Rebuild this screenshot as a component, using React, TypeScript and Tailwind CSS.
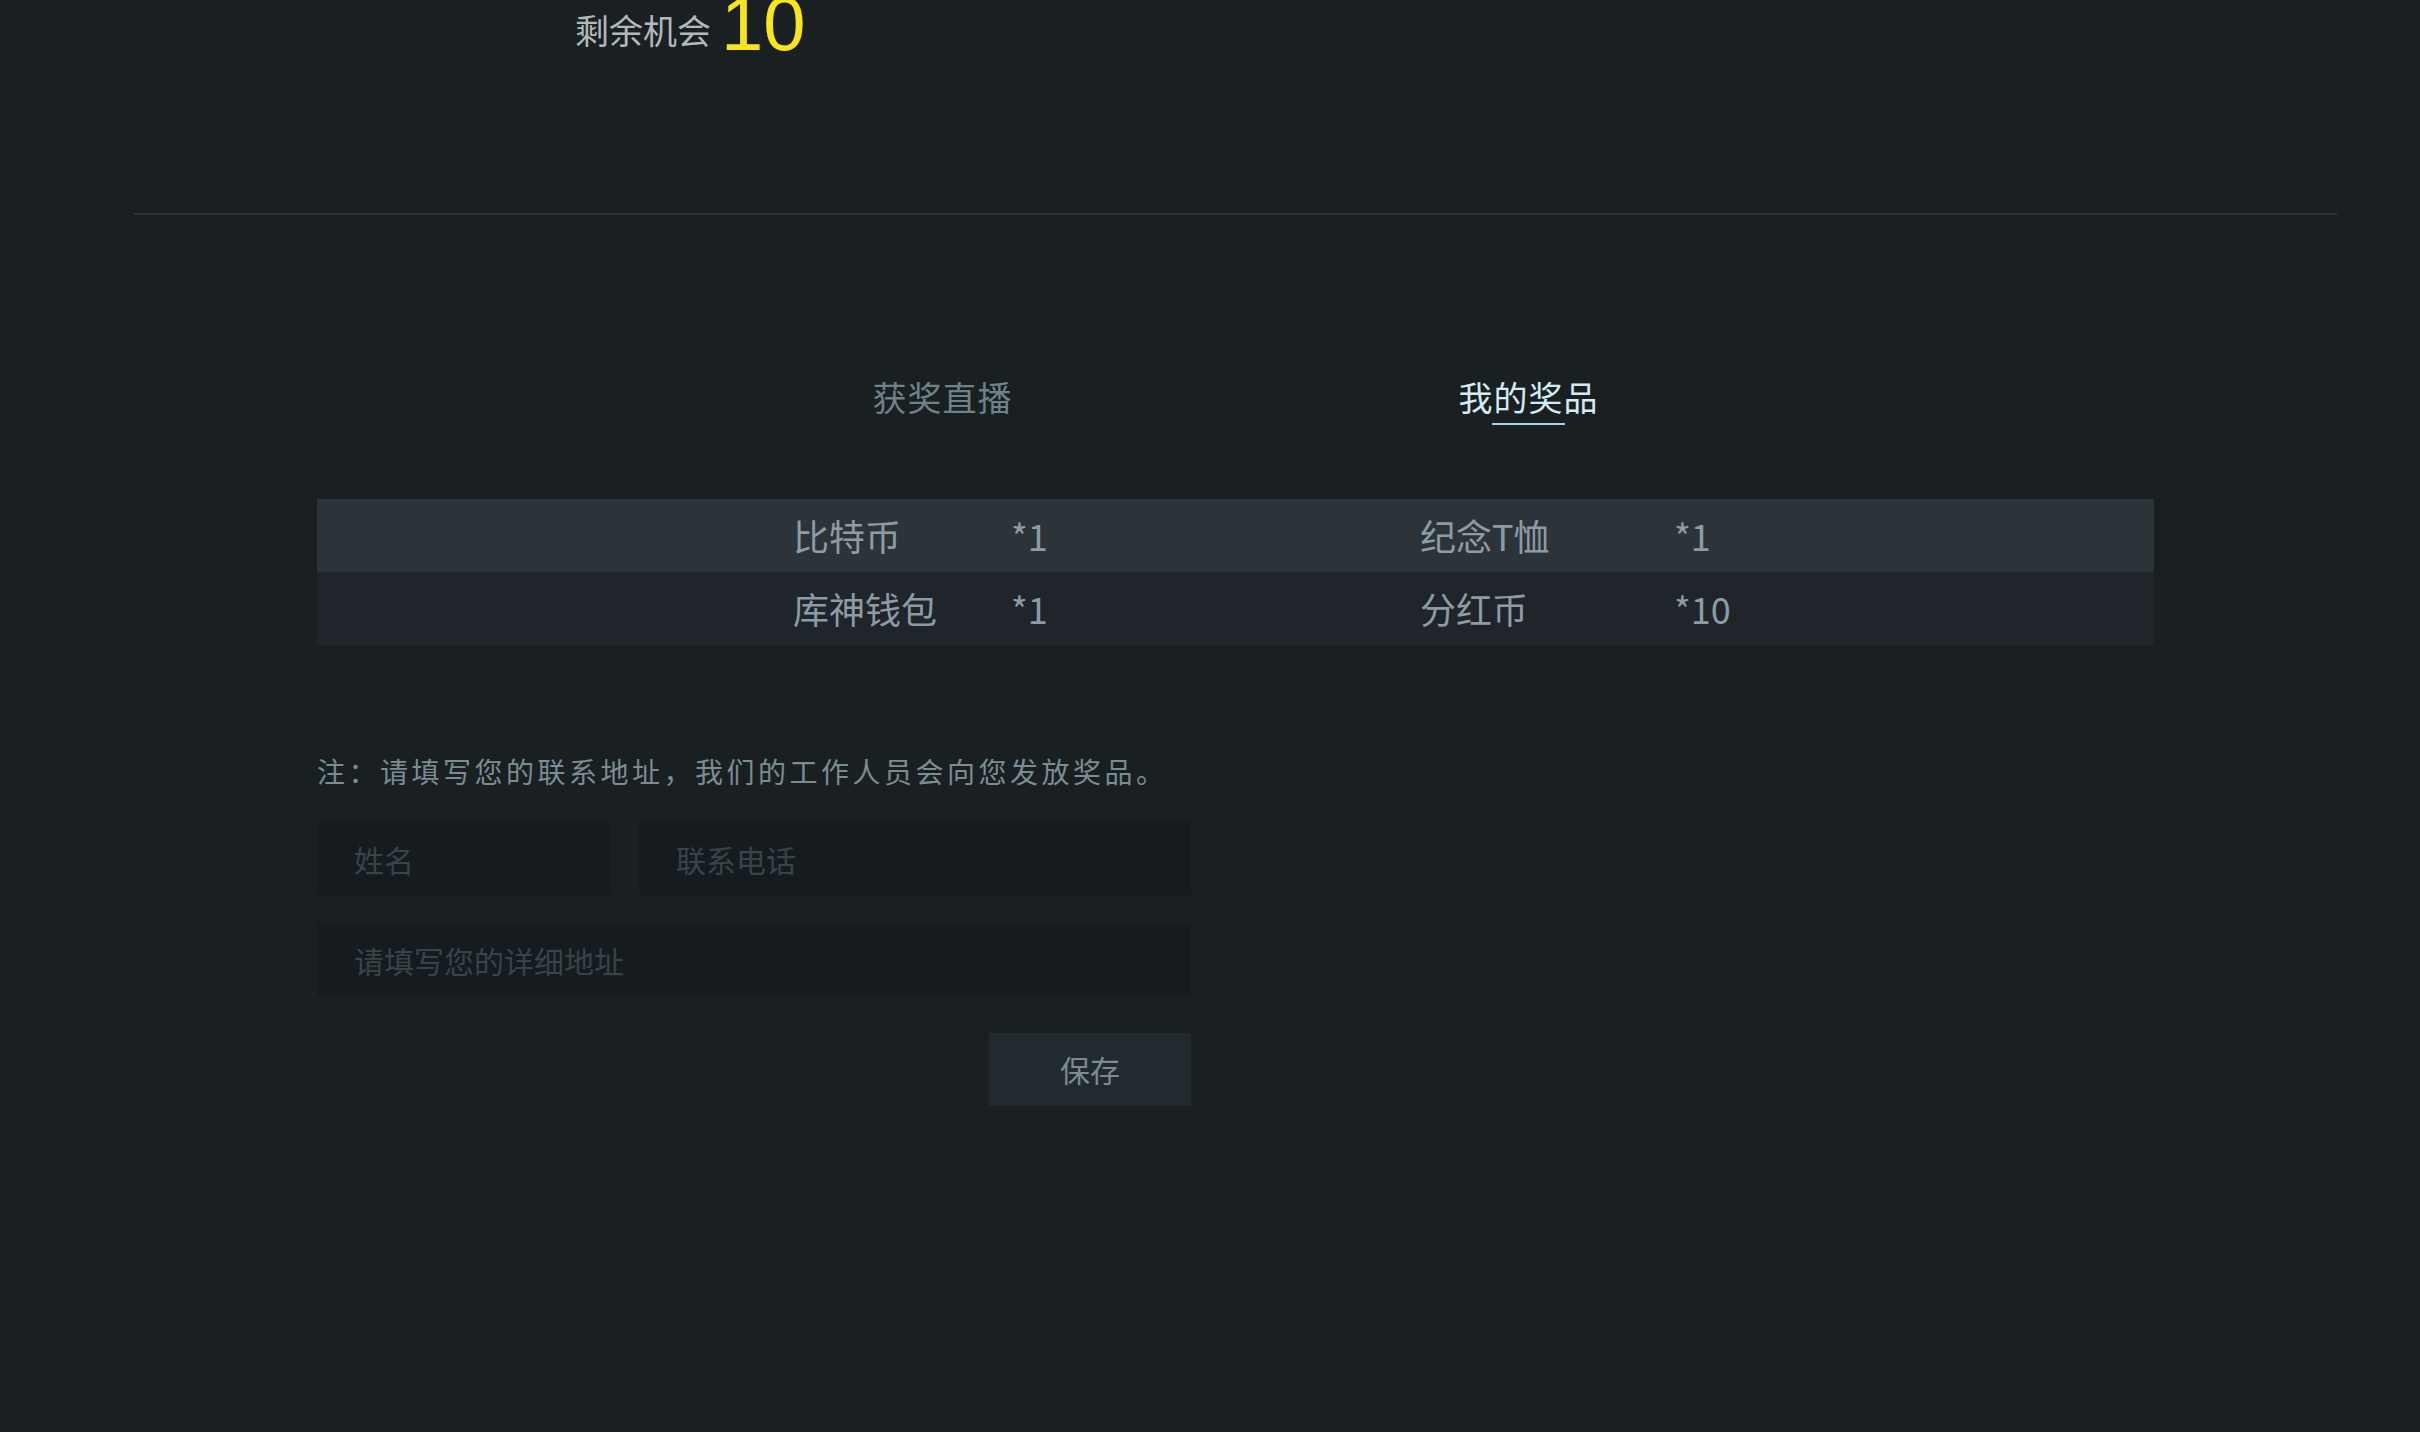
import { useState } from "react";

type Prize = {
  name: string;
  count: string;
};

const prizeRows: Prize[][] = [
  [
    { name: "比特币", count: "*1" },
    { name: "纪念T恤", count: "*1" },
  ],
  [
    { name: "库神钱包", count: "*1" },
    { name: "分红币", count: "*10" },
  ],
];

const tabs = ["获奖直播", "我的奖品"];

export default function App() {
  const [activeTab, setActiveTab] = useState(1);
  const [name, setName] = useState("");
  const [phone, setPhone] = useState("");
  const [address, setAddress] = useState("");

  return (
    <div className="min-h-screen overflow-hidden bg-[#1a1f22] font-['Noto_Sans_CJK_SC','Noto_Sans',sans-serif]">
      <div className="ml-[134px] w-[2203px]">
        <div className="flex h-[213px] items-start">
          <div className="-mt-[14px] flex items-end pl-[441px]">
            <span className="mb-[15px] text-[34px] leading-none text-[#b3b8ba]">剩余机会</span>
            <span className="ml-[10px] font-['Liberation_Sans',sans-serif] text-[76px] leading-none text-[#f8e51b]">
              10
            </span>
          </div>
        </div>

        <div className="h-[2px] bg-[#2a3236]" />

        <div className="mt-[158px] flex justify-center">
          <div className="flex w-[1172px]">
            {tabs.map((tab, i) => (
              <button
                key={tab}
                type="button"
                onClick={() => setActiveTab(i)}
                className="flex flex-1 flex-col items-center"
              >
                <span
                  className={
                    i === activeTab
                      ? "text-[34px] leading-[48px] tracking-[1px] text-[#d3ebf3]"
                      : "text-[34px] leading-[48px] tracking-[1px] text-[#6f8288]"
                  }
                >
                  {tab}
                </span>
                <span
                  className={
                    i === activeTab
                      ? "mt-[2px] h-[2px] w-[73px] bg-[#a6d3e7]"
                      : "mt-[2px] h-[2px] w-[73px] bg-transparent"
                  }
                />
              </button>
            ))}
          </div>
        </div>

        <div className="mx-[183px] mt-[74px]">
          {prizeRows.map((row, i) => (
            <div
              key={i}
              className={
                i % 2 === 0
                  ? "grid h-[73px] grid-cols-[476px_218px_409px_254px_1fr] items-center bg-[#2c343a] pb-[2px] text-[36px] text-[#8d9ca4]"
                  : "grid h-[73px] grid-cols-[476px_218px_409px_254px_1fr] items-center bg-[#1f252b] pb-[2px] text-[36px] text-[#8d9ca4]"
              }
            >
              <span />
              <span>{row[0].name}</span>
              <span>{row[0].count}</span>
              <span>{row[1].name}</span>
              <span>{row[1].count}</span>
            </div>
          ))}
        </div>

        <div className="ml-[183px] mt-[106px] w-[874px]">
          <p className="text-[28px] leading-[40px] tracking-[3.5px] whitespace-nowrap text-[#7b8c93]">
            注：请填写您的联系地址，我们的工作人员会向您发放奖品。
          </p>

          <div className="mt-[31px] flex gap-[28px]">
            <input
              value={name}
              onChange={(event) => setName(event.target.value)}
              placeholder="姓名"
              className="h-[73px] w-[294px] bg-[#151b1e] pl-[37px] text-[30px] text-[#8d9ca4] outline-none placeholder:text-[#38444a]"
            />
            <input
              value={phone}
              onChange={(event) => setPhone(event.target.value)}
              placeholder="联系电话"
              className="h-[73px] flex-1 bg-[#151b1e] pl-[37px] text-[30px] text-[#8d9ca4] outline-none placeholder:text-[#38444a]"
            />
          </div>

          <input
            value={address}
            onChange={(event) => setAddress(event.target.value)}
            placeholder="请填写您的详细地址"
            className="mt-[28px] block h-[73px] w-full bg-[#151b1e] pl-[37px] text-[30px] text-[#8d9ca4] outline-none placeholder:text-[#38444a]"
          />

          <div className="mt-[37px] flex justify-end">
            <button
              type="button"
              className="h-[73px] w-[202px] bg-[#222a2f] text-[30px] text-[#7b8b93]"
            >
              保存
            </button>
          </div>
        </div>
      </div>
    </div>
  );
}
